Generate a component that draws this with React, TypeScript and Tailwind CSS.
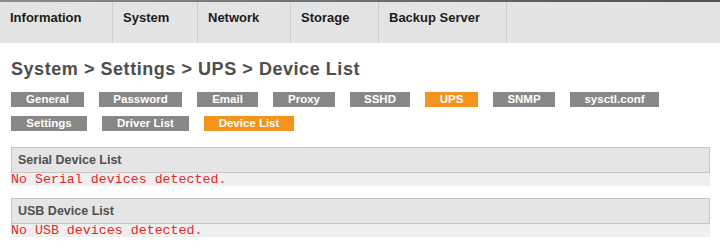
const navTabs = [
  { label: "Information", width: "w-[113px]" },
  { label: "System", width: "w-[85px]" },
  { label: "Network", width: "w-[93px]" },
  { label: "Storage", width: "w-[88px]" },
  { label: "Backup Server", width: "w-[128px]" },
];

const subTabs = [
  { label: "General", width: "w-[73px]", active: false },
  { label: "Password", width: "w-[83px]", active: false },
  { label: "Email", width: "w-[61px]", active: false },
  { label: "Proxy", width: "w-[62px]", active: false },
  { label: "SSHD", width: "w-[60px]", active: false },
  { label: "UPS", width: "w-[53px]", active: true },
  { label: "SNMP", width: "w-[62px]", active: false },
  { label: "sysctl.conf", width: "w-[89px]", active: false },
  { label: "Settings", width: "w-[76px]", active: false },
  { label: "Driver List", width: "w-[87px]", active: false },
  { label: "Device List", width: "w-[90px]", active: true },
];

const deviceLists = [
  { title: "Serial Device List", message: "No Serial devices detected." },
  { title: "USB Device List", message: "No USB devices detected." },
];

function App() {
  return (
    <div className="w-[720px] h-[250px] bg-white overflow-hidden font-['Liberation_Sans',Arial,sans-serif]">
      {/* top navigation */}
      <div className="h-[2px] bg-linear-to-r from-[#8c8c8c] to-[#4b525b]" />
      <nav className="flex h-[41px] bg-[#e4e4e4]">
        {navTabs.map((tab) => (
          <div
            key={tab.label}
            className={`${tab.width} shrink-0 border-r border-[#cecece] pl-[10px] pt-[8px] text-[13px] font-bold text-[#1c1c1c] leading-[16px]`}
          >
            {tab.label}
          </div>
        ))}
      </nav>

      <div className="px-[11px]">
        <h1 className="mt-[15px] text-[18px] font-bold leading-[22px] tracking-[0.55px] text-[#4d4d4d]">
          System &gt; Settings &gt; UPS &gt; Device List
        </h1>

        {/* settings sub menu */}
        <div className="mt-[12px] flex flex-wrap gap-x-[15px] gap-y-[9px] w-[660px]">
          {subTabs.map((tab) => (
            <div
              key={tab.label}
              className={`${tab.width} h-[15px] text-center text-[11.5px] font-bold leading-[15px] text-white ${
                tab.active ? "bg-[#f5931f]" : "bg-[#878787]"
              }`}
            >
              {tab.label}
            </div>
          ))}
        </div>

        <div className="mt-[16px] flex flex-col gap-[12px]">
          {deviceLists.map((list) => (
            <section key={list.title} className="w-[699px]">
              <div className="h-[26px] border border-[#c6c6c6] bg-[#e5e5e5] pl-[6px] text-[12.5px] font-bold leading-[24px] text-[#505050]">
                {list.title}
              </div>
              <div className="h-[13px] bg-[#efefef] font-['Liberation_Mono','Courier_New',monospace] text-[13.3px] leading-[13px] text-[#df2a2a]">
                {list.message}
              </div>
            </section>
          ))}
        </div>
      </div>
    </div>
  );
}

export default App;
